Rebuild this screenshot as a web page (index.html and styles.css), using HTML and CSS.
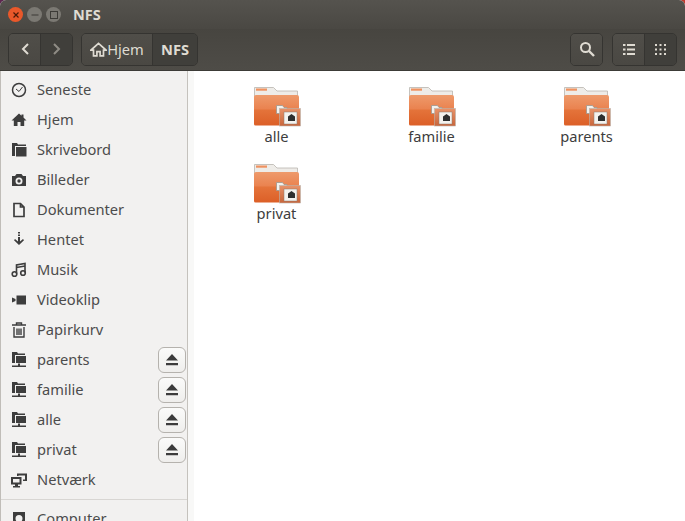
FILE: index.html

```html
<!DOCTYPE html>
<html lang="da">
<head>
  <meta charset="UTF-8">
  <meta name="viewport" content="width=device-width, initial-scale=1.0">
  <title>NFS</title>
  <link rel="stylesheet" href="styles.css">
</head>
<body>
  <svg class="defs" width="0" height="0">
    <defs>
      <linearGradient id="g-body" x1="0" y1="0" x2="0" y2="1">
        <stop offset="0" stop-color="#ee9a6b"/>
        <stop offset=".45" stop-color="#ea8350"/>
        <stop offset=".5" stop-color="#e4733a"/>
        <stop offset="1" stop-color="#dc5f27"/>
      </linearGradient>
      <linearGradient id="g-mini" x1="0" y1="0" x2="0" y2="1">
        <stop offset="0" stop-color="#e8936a"/>
        <stop offset="1" stop-color="#c9653a"/>
      </linearGradient>
    </defs>
    <symbol id="i-net" viewBox="0 0 16 16">
      <path d="M1 0h5l1 1.500h7V3H4v8H1z" fill="#3d3d3d"/>
      <path d="M5 4h10v7H5zM7 11.500h2V14H7zM1 13.500h14V15H1z" fill="#3d3d3d"/>
    </symbol>
    <symbol id="i-eject" viewBox="0 0 14 12">
      <path d="M7 0l6 6.500H1zM1 9h12v2.200H1z" fill="#3c3c3c"/>
    </symbol>
    <symbol id="i-folder" viewBox="0 0 48 42">
      <path d="M1.500 1.500h19l3.500 3.500h20.500v6h-43z" fill="#eeece8" stroke="#b9b5ae" stroke-width=".8"/>
      <rect x="3" y="2.500" width="11" height="2.200" fill="#ef9260"/>
      <path d="M1 11q0-2 2-2h41q2 0 2 2v27q0 1.500-1.500 1.500h-42Q1 39.500 1 38z" fill="url(#g-body)"/>
      <path d="M23.500 19.500h6l1.500 2h3v6h-10.500z" fill="#f3f1ed" stroke="#9b978f" stroke-width=".8"/>
      <rect x="26.500" y="22.500" width="21" height="17.500" fill="url(#g-mini)" stroke="#b9b5ae" stroke-width=".6"/>
      <rect x="31" y="26" width="13" height="12" fill="#f4f2ee" stroke="#8a7c72" stroke-width=".5"/>
      <path d="M38.500 28l3.500 2.500V35h-7v-4.500z" fill="#2f2f2f"/>
    </symbol>
  </svg>

  <div class="window">
    <div class="titlebar">
      <span class="wbtn wbtn-close">
        <svg viewBox="0 0 8 8" width="8" height="8"><path d="M1.500 1.500l5 5M6.500 1.500l-5 5" stroke="#4a1a08" stroke-width="1.200"/></svg>
      </span>
      <span class="wbtn">
        <svg viewBox="0 0 8 8" width="8" height="8"><path d="M.5 4h7" stroke="#3c3b37" stroke-width="1.200"/></svg>
      </span>
      <span class="wbtn">
        <svg viewBox="0 0 8 8" width="8" height="8"><rect x=".5" y=".5" width="7" height="7" fill="none" stroke="#3c3b37"/></svg>
      </span>
      <span class="title">NFS</span>
    </div>

    <div class="toolbar">
      <div class="group">
        <button class="tbtn nav">
          <svg viewBox="0 0 10 14" width="10" height="14"><path d="M8 2L3 7l5 5" fill="none" stroke="#dfdbd2" stroke-width="2"/></svg>
        </button>
        <button class="tbtn nav-next tbtn-dark">
          <svg viewBox="0 0 10 14" width="10" height="14"><path d="M2 2l5 5-5 5" fill="none" stroke="#8f8c85" stroke-width="2"/></svg>
        </button>
      </div>
      <div class="group">
        <button class="tbtn crumb">
          <svg viewBox="0 0 16 14" width="17" height="15"><path d="M8 1.200L1 7.500h2.300V13h3.200V9h3v4h3.200V7.500H15z" fill="none" stroke="#dfdbd2" stroke-width="1.600"/></svg>
          <span class="crumb-label">Hjem</span>
        </button>
        <button class="tbtn crumb-current tbtn-dark">NFS</button>
      </div>
      <div class="spacer"></div>
      <div class="group">
        <button class="tbtn square">
          <svg viewBox="0 0 16 16" width="16" height="16"><circle cx="6.500" cy="6.500" r="4.500" fill="none" stroke="#dfdbd2" stroke-width="2"/><path d="M10 10l5 5" stroke="#dfdbd2" stroke-width="2.400"/></svg>
        </button>
      </div>
      <div class="group views">
        <button class="tbtn square">
          <svg viewBox="0 0 12 11" width="12" height="11" fill="#dfdbd2"><path d="M0 0h2.500v2H0zM4 0h8v2H4zM0 4.500h2.500v2H0zM4 4.500h8v2H4zM0 9h2.500v2H0zM4 9h8v2H4z"/></svg>
        </button>
        <button class="tbtn nav-next tbtn-dark">
          <svg viewBox="0 0 11 11" width="11" height="11" fill="#dfdbd2"><path d="M0 0h2v2H0zM4.500 0h2v2h-2zM9 0h2v2H9zM0 4.500h2v2H0zM4.500 4.500h2v2h-2zM9 4.500h2v2H9zM0 9h2v2H0zM4.500 9h2v2h-2zM9 9h2v2H9z"/></svg>
        </button>
      </div>
    </div>

    <div class="main">
      <aside class="sidebar">
        <div class="row">
          <svg class="ico" viewBox="0 0 16 16"><circle cx="8" cy="8" r="6.500" fill="none" stroke="#3d3d3d" stroke-width="1.500"/><path d="M5 7l3 2.500L11.500 5" fill="none" stroke="#3d3d3d"/></svg>
          <span>Seneste</span>
        </div>
        <div class="row">
          <svg class="ico" viewBox="0 0 16 16"><path d="M8 1.500L.5 8.500h2.300V14h3.700v-4h3v4h3.700V8.500h2.300L12.500 5.500V2.500h-2v1.200z" fill="#3d3d3d"/></svg>
          <span>Hjem</span>
        </div>
        <div class="row">
          <svg class="ico" viewBox="0 0 16 16"><path d="M1 1h5l1 1.500h8V4H4v10H1z" fill="#3d3d3d"/><path d="M5 5h10.500v9.500H5z" fill="#3d3d3d"/></svg>
          <span>Skrivebord</span>
        </div>
        <div class="row">
          <svg class="ico" viewBox="0 0 16 16"><path fill-rule="evenodd" d="M1 4h3l1.500-2h5L12 4h3v10H1zM8 5.500a3.500 3.500 0 1 0 0 7 3.500 3.500 0 0 0 0-7z" fill="#3d3d3d"/><circle cx="8" cy="9" r="1.700" fill="#3d3d3d"/></svg>
          <span>Billeder</span>
        </div>
        <div class="row">
          <svg class="ico" viewBox="0 0 16 16"><path d="M3 1.500h6.500l3.500 3.500v9.500H3zM9.500 1.500V5H13" fill="none" stroke="#3d3d3d" stroke-width="1.700"/></svg>
          <span>Dokumenter</span>
        </div>
        <div class="row">
          <svg class="ico" viewBox="0 0 16 16"><path d="M7 0h2v1.500H7zM7 2.500h2V4H7zM7 5h2v4.500l3-2.500 1 1.300L8 13 3 8.300 4 7l3 2.500z" fill="#3d3d3d"/></svg>
          <span>Hentet</span>
        </div>
        <div class="row">
          <svg class="ico" viewBox="0 0 16 16"><path d="M5.500 11.500V3l8.500-1.500v9M5.500 5.500L14 4" fill="none" stroke="#3d3d3d" stroke-width="1.600"/><circle cx="3.500" cy="12" r="2.300" fill="none" stroke="#3d3d3d" stroke-width="1.600"/><circle cx="12" cy="11" r="2.300" fill="none" stroke="#3d3d3d" stroke-width="1.600"/></svg>
          <span>Musik</span>
        </div>
        <div class="row">
          <svg class="ico" viewBox="0 0 16 16"><path d="M5.500 3.500H15v9H5.500zM1 5.500l3.500 1.500v2L1 10.500z" fill="#3d3d3d"/></svg>
          <span>Videoklip</span>
        </div>
        <div class="row">
          <svg class="ico" viewBox="0 0 16 16"><path d="M1 3h14M5.500 3V1h5v2M3 5v10h10V5M6 6.500v6.500M8 6.500v6.500M10 6.500v6.500" fill="none" stroke="#3d3d3d" stroke-width="1.400"/></svg>
          <span>Papirkurv</span>
        </div>
        <div class="row">
          <svg class="ico"><use href="#i-net"/></svg>
          <span>parents</span>
          <button class="eject"><svg width="14" height="12"><use href="#i-eject"/></svg></button>
        </div>
        <div class="row">
          <svg class="ico"><use href="#i-net"/></svg>
          <span>familie</span>
          <button class="eject"><svg width="14" height="12"><use href="#i-eject"/></svg></button>
        </div>
        <div class="row">
          <svg class="ico"><use href="#i-net"/></svg>
          <span>alle</span>
          <button class="eject"><svg width="14" height="12"><use href="#i-eject"/></svg></button>
        </div>
        <div class="row">
          <svg class="ico"><use href="#i-net"/></svg>
          <span>privat</span>
          <button class="eject"><svg width="14" height="12"><use href="#i-eject"/></svg></button>
        </div>
        <div class="row">
          <svg class="ico" viewBox="0 0 16 16"><path d="M0 5h10.500v7.500H7V14h2v1.500H2V14h2v-1.500H0zM2 7v3.500h6.500V7z" fill="#3d3d3d" fill-rule="evenodd"/><path d="M6 1.500h10V9h-4V7.500h2V3.500H7.500V4H6z" fill="#3d3d3d"/></svg>
          <span>Netværk</span>
        </div>
        <div class="sep"></div>
        <div class="row">
          <svg class="ico" viewBox="0 0 16 16"><path fill-rule="evenodd" d="M2 1h12v14H2zM8 4a3.500 3.500 0 1 0 0 7 3.500 3.500 0 0 0 0-7z" fill="#3d3d3d"/></svg>
          <span>Computer</span>
        </div>
      </aside>

      <div class="files">
        <div class="file"><svg class="folder"><use href="#i-folder"/></svg><span>alle</span></div>
        <div class="file"><svg class="folder"><use href="#i-folder"/></svg><span>familie</span></div>
        <div class="file"><svg class="folder"><use href="#i-folder"/></svg><span>parents</span></div>
        <div class="file"><svg class="folder"><use href="#i-folder"/></svg><span>privat</span></div>
      </div>
    </div>
  </div>
</body>
</html>
```

FILE: styles.css

```css
html, body {
  margin: 0;
  height: 100%;
  overflow: hidden;
}

body {
  font-family: 'Noto Sans', 'Open Sans', sans-serif;
  font-size: 14.67px;
  color: #4c4c4c;
  background: linear-gradient(to right, #5e2750, #c0392b);
}

.defs {
  position: absolute;
}

.window {
  display: flex;
  flex-direction: column;
  height: 521px;
  border-radius: 6px 6px 0 0;
  overflow: hidden;
  background: #fff;
}

.titlebar {
  display: flex;
  align-items: center;
  gap: 4px;
  height: 29px;
  padding-left: 8px;
  background: linear-gradient(#55534e, #4a4843);
  box-sizing: border-box;
}

.wbtn {
  display: flex;
  align-items: center;
  justify-content: center;
  width: 15px;
  height: 15px;
  border-radius: 50%;
  background: #7b7973;
}

.wbtn-close {
  background: #e9582a;
}

.title {
  margin: -2px 0 0 8px;
  color: #dfdbd2;
  font-weight: bold;
  font-size: 14.500px;
}

.toolbar {
  display: flex;
  align-items: center;
  height: 42px;
  padding: 0 8px 1px;
  gap: 8px;
  background: linear-gradient(#474540, #4e4c47);
  border-bottom: 1px solid #3c3b37;
  box-sizing: border-box;
}

.spacer {
  flex: 1;
}

.group {
  display: flex;
  height: 33px;
  border: 1px solid #353431;
  border-radius: 5px;
  overflow: hidden;
  box-sizing: border-box;
}

.views {
  margin-left: 1px;
}

.tbtn {
  display: flex;
  align-items: center;
  justify-content: center;
  padding: 0;
  border: 0;
  height: 100%;
  color: #dfdbd2;
  font: inherit;
  background: linear-gradient(#504e49, #4a4843);
}

.tbtn-dark {
  background: #403f3b;
  border-left: 1px solid #353431;
}

.nav {
  width: 31px;
}

.nav-next {
  width: 32px;
}

.crumb {
  width: 70px;
}

.crumb-label {
  color: #dfdbd2;
}

.crumb-current {
  width: 45px;
  font-weight: bold;
}

.square {
  width: 31px;
}

.main {
  display: flex;
  flex: 1;
  min-height: 0;
}

.sidebar {
  width: 188px;
  padding-top: 4px;
  flex-shrink: 0;
  overflow: hidden;
  box-sizing: border-box;
  background: #f2f1f0;
  border-left: 1px solid #c0bdb8;
  border-right: 1px solid #c5c2bd;
}

.row {
  display: flex;
  align-items: center;
  height: 30px;
  padding: 0 1px 0 10px;
  box-sizing: border-box;
}

.row span {
  margin-top: -2px;
}

.ico {
  width: 16px;
  height: 16px;
  margin-right: 10px;
  flex-shrink: 0;
}

.eject {
  display: flex;
  align-items: center;
  justify-content: center;
  margin-left: auto;
  width: 28px;
  height: 26px;
  padding: 0;
  border: 1px solid #b5b2ad;
  border-radius: 6px;
  background: linear-gradient(#fbfbfa, #efeeec);
}

.sep {
  height: 1px;
  margin: 4px 0;
  background: #d8d6d3;
}

.files {
  flex: 1;
  display: grid;
  grid-template-columns: repeat(3, 155px);
  grid-auto-rows: 77px;
  padding: 15px 0 0 5px;
  background: #fff;
  border-left: 6px solid #f8f8f7;
}

.file {
  display: flex;
  flex-direction: column;
  align-items: center;
}

.folder {
  width: 48px;
  height: 42px;
}

.file span {
  margin-top: -2px;
  color: #3d3d3d;
}
```
